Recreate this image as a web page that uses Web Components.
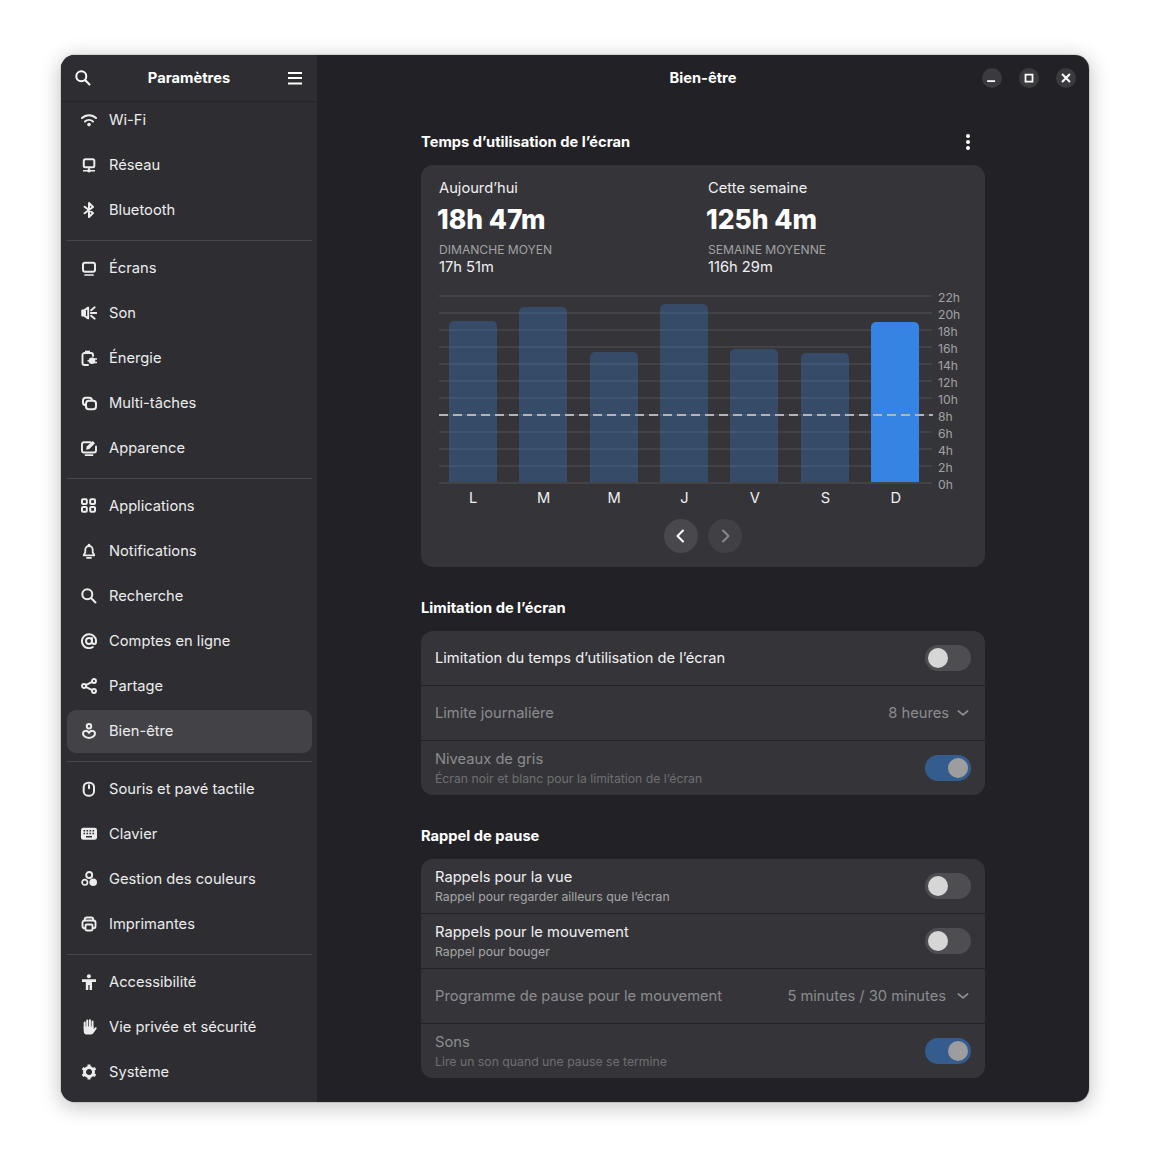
<!DOCTYPE html>
<html lang="fr"><head><meta charset="utf-8"><title>Paramètres</title>
<style>
html,body{margin:0;background:#fff}
body{font-family:Inter,"Noto Sans",sans-serif;font-size:15px;color:#f0f0f1}
</style></head><body>
<wb-page>
<wb-window>
  <wb-sidebar slot="side" title="Paramètres">
    <wb-nav icon="wifi">Wi-Fi</wb-nav><wb-nav icon="network">Réseau</wb-nav><wb-nav icon="bluetooth">Bluetooth</wb-nav>
    <wb-sep></wb-sep>
    <wb-nav icon="display">Écrans</wb-nav><wb-nav icon="sound">Son</wb-nav><wb-nav icon="power">Énergie</wb-nav><wb-nav icon="multi">Multi-tâches</wb-nav><wb-nav icon="appearance">Apparence</wb-nav>
    <wb-sep></wb-sep>
    <wb-nav icon="apps">Applications</wb-nav><wb-nav icon="bell">Notifications</wb-nav><wb-nav icon="search">Recherche</wb-nav><wb-nav icon="at">Comptes en ligne</wb-nav><wb-nav icon="share">Partage</wb-nav><wb-nav icon="wellbeing" selected>Bien-être</wb-nav>
    <wb-sep></wb-sep>
    <wb-nav icon="mouse">Souris et pavé tactile</wb-nav><wb-nav icon="keyboard">Clavier</wb-nav><wb-nav icon="color">Gestion des couleurs</wb-nav><wb-nav icon="printer">Imprimantes</wb-nav>
    <wb-sep></wb-sep>
    <wb-nav icon="a11y">Accessibilité</wb-nav><wb-nav icon="hand">Vie privée et sécurité</wb-nav><wb-nav icon="gear">Système</wb-nav>
  </wb-sidebar>
  <wb-content slot="main" title="Bien-être">
    <wb-section heading="Temps d’utilisation de l’écran" menu>
      <wb-usage-card></wb-usage-card>
    </wb-section>
    <wb-section heading="Limitation de l’écran">
      <wb-list>
        <wb-row label="Limitation du temps d’utilisation de l’écran"><wb-switch></wb-switch></wb-row>
        <wb-row label="Limite journalière" disabled><wb-combo>8 heures</wb-combo></wb-row>
        <wb-row label="Niveaux de gris" sub="Écran noir et blanc pour la limitation de l’écran" disabled><wb-switch on dim></wb-switch></wb-row>
      </wb-list>
    </wb-section>
    <wb-section heading="Rappel de pause">
      <wb-list>
        <wb-row label="Rappels pour la vue" sub="Rappel pour regarder ailleurs que l’écran"><wb-switch></wb-switch></wb-row>
        <wb-row label="Rappels pour le mouvement" sub="Rappel pour bouger"><wb-switch></wb-switch></wb-row>
        <wb-row label="Programme de pause pour le mouvement" disabled><wb-combo wide>5 minutes / 30 minutes</wb-combo></wb-row>
        <wb-row label="Sons" sub="Lire un son quand une pause se termine" disabled><wb-switch on dim></wb-switch></wb-row>
      </wb-list>
    </wb-section>
  </wb-content>
</wb-window>
</wb-page>
<script>
const S=(w=2)=>`fill="none" stroke="currentColor" stroke-width="${w}" stroke-linecap="round" stroke-linejoin="round"`;
const BG='#2e2e32';
const I={
search:`<g ${S()}><circle cx="6.3" cy="6.3" r="5"/><path d="M10.3 10.3l4.200 4.200"/></g>`,
wifi:`<g ${S()}><path d="M1 6a10 10 0 0 1 14 0"/><path d="M4 9.500a6 6 0 0 1 8 0"/></g><circle cx="8" cy="12.600" r="1.800" fill="currentColor"/>`,
network:`<g ${S()}><rect x="2.800" y="2.300" width="10.500" height="8" rx="1.500"/></g><path d="M2 13.700h12M8 10v3.700" stroke="currentColor" stroke-width="1.600" fill="none"/><circle cx="8" cy="13.700" r="1.800" fill="currentColor"/>`,
bluetooth:`<path d="M3.600 4.800L12 11l-4 4V1l4 4-8.400 6.200" ${S(2)}/>`,
display:`<g ${S()}><rect x="2" y="2.700" width="12" height="9" rx="2"/></g><path d="M4 15h8" ${S(1.700)}/>`,
sound:`<path d="M1.200 5.400h2L7.200 2.600v10.800L3.200 10.600h-2z" ${S(1.900)}/><path d="M1.500 5.500h3.500v5H1.500z" fill="currentColor"/><path d="M9.800 8h5.700M10.100 5.300l3.600-3M10.100 10.700l3.600 3" ${S(1.800)}/>`,
power:`<path d="M12 6V5a2 2 0 0 0-2-2H3.500a2 2 0 0 0-2 2v8a2 2 0 0 0 2 2H7" ${S(1.900)}/><path d="M4 .7h5V3H4z" fill="currentColor"/><circle cx="11" cy="10.700" r="3.300" fill="currentColor"/><path d="M6.500 10.700H9M13 9h3M13 12.400h3" fill="none" stroke="currentColor" stroke-width="1.500"/>`,
multi:`<rect x="2" y="2.700" width="9" height="7.500" rx="2.800" ${S(2)}/><rect x="5" y="5.800" width="10" height="8.500" rx="2.800" ${S(2)} style="fill:${BG}"/>`,
appearance:`<path d="M9.500 2.200H3a2 2 0 0 0-2 2v6.300a2 2 0 0 0 2 2h10a2 2 0 0 0 2-2V6.500" ${S(1.900)}/><path d="M4.500 15.200h7" ${S(1.700)}/><path d="M5 9.800l.7-3.300 6-5.500 2.300 2.200-5.600 5.800z" fill="currentColor"/>`,
apps:`<g fill="none" stroke="currentColor" stroke-width="2"><rect x="1" y="1.300" width="4.800" height="4.800" rx="1"/><rect x="9.200" y="1.300" width="4.800" height="4.800" rx="1"/><rect x="1" y="8.900" width="4.800" height="4.800" rx="1"/><rect x="9.200" y="8.900" width="4.800" height="4.800" rx="1"/></g>`,
bell:`<path d="M8 3a3.700 3.700 0 0 0-3.700 3.700v2.500L2.800 12v.4h10.400V12l-1.500-2.800V6.700A3.700 3.700 0 0 0 8 3z" ${S(1.800)}/><circle cx="8" cy="2" r="1.300" fill="currentColor"/><path d="M6 14.800h4" ${S(1.800)}/>`,
at:`<g ${S()}><circle cx="8" cy="8" r="3"/><path d="M11 5v4.200a2.100 2.100 0 0 0 3.800 1c.6-2.900-.2-5.600-2.300-7.400A7 7 0 1 0 11.800 14"/></g>`,
share:`<g fill="none" stroke="currentColor" stroke-width="1.900"><circle cx="3" cy="8" r="2"/><circle cx="13" cy="3" r="2"/><circle cx="13" cy="13" r="2"/><path d="M4.800 7.100l6.400-3.200M4.800 8.900l6.400 3.200"/></g>`,
wellbeing:`<g fill="none" stroke="currentColor" stroke-width="2"><circle cx="8" cy="3.300" r="2.200"/><path d="M8 9.800C6.800 8 5 7.500 3.500 8.100 1.800 8.900 1.500 11.100 2.800 12.700 4 14.200 6 15 8 15s4-.8 5.200-2.300c1.300-1.600 1-3.800-.7-4.600C11 7.500 9.200 8 8 9.800z"/></g>`,
mouse:`<g ${S()}><rect x="2.700" y="1.700" width="10.300" height="13" rx="4.500"/><path d="M8 4.300v3"/></g>`,
keyboard:`<rect x="0" y="1.800" width="16" height="12" rx="2.400" fill="currentColor"/><path d="M2.500 4.800h1.600M5.500 4.800h1.600M8.500 4.800h1.600M11.500 4.800h1.600M2.500 7.500h1.600M5.500 7.500h1.600M8.500 7.500h1.600M11.500 7.500h1.600M5 10.800h6" stroke="${BG}" stroke-width="1.500"/>`,
color:`<g fill="none" stroke="currentColor"><circle cx="8.200" cy="4" r="3" stroke-width="1.900"/><circle cx="3.800" cy="11.300" r="2.700" stroke-width="1.700"/></g><circle cx="12.200" cy="11.300" r="3.800" fill="currentColor"/>`,
printer:`<path d="M3.800 4.500V3.200A1.700 1.700 0 0 1 5.500 1.500h5a1.700 1.700 0 0 1 1.700 1.700v1.300" ${S(1.900)}/><path d="M4 12.300H3.500a2 2 0 0 1-2-2V6.500a2 2 0 0 1 2-2h9a2 2 0 0 1 2 2v3.800a2 2 0 0 1-2 2H12" ${S(1.900)}/><rect x="4.500" y="8.500" width="7" height="6" rx="1.200" ${S(1.900)}/>`,
a11y:`<circle cx="7.900" cy="2.200" r="2" fill="currentColor"/><path d="M1 5.300h14v2.600h-4v8H8.600v-5H7.300v5H4.800v-8H1z" fill="currentColor"/>`,
hand:`<path d="M3.700 9V3.500M6.200 8V1.600M8.900 8V1.300M11.500 9V2.500" fill="none" stroke="currentColor" stroke-width="2" stroke-linecap="round"/><path d="M2.700 7.500h9.800v2.600l1.700-1.600c.8-.6 1.900.3 1.300 1.200l-3 4.400a3 3 0 0 1-2.400 1.400H6.300a3.600 3.600 0 0 1-3.600-3.600z" fill="currentColor"/>`,
gear:`<circle cx="8" cy="8" r="4.500" fill="none" stroke="currentColor" stroke-width="3"/><path d="M8 .5v3M8 12.500v3M1.500 4.300l2.600 1.500M11.900 10.200l2.600 1.500M1.500 11.700l2.600-1.500M11.900 5.800l2.600-1.500" stroke="currentColor" stroke-width="3"/>`,
menu:`<path d="M1 2h14v2H1zM1 7h14v2H1zM1 12.500h14v2H1z" fill="currentColor"/>`,
chevL:`<path d="M10 2.500L4.500 8l5.500 5.500" ${S()}/>`,
chevR:`<path d="M6 2.500L11.500 8 6 13.500" ${S()}/>`,
chevD:`<path d="M2 5.500l6 5 6-5" ${S(2.600)}/>`,
min:`<path d="M2.500 10.500h9v2h-9z" fill="currentColor"/>`,
max:`<path d="M4 4h8v8H4z" fill="none" stroke="currentColor" stroke-width="2"/>`,
close:`<path d="M3.500 3.500l9 9M12.500 3.500l-9 9" fill="none" stroke="currentColor" stroke-width="2.300"/>`,
};
function def(name,css,html){
  customElements.define(name,class extends HTMLElement{
    connectedCallback(){
      if(this.shadowRoot)return;
      const r=this.attachShadow({mode:'open'});
      r.innerHTML=`<style>${css}</style>`+(typeof html==='function'?html(this):html);
    }
  });
}
const F14='400 14.700px/18px Inter,sans-serif',B14='700 14.700px/18px Inter,sans-serif';
def('wb-icon',`:host{display:inline-flex;width:var(--s,16px);height:var(--s,16px);flex:none;color:inherit}svg{width:100%;height:100%;display:block}`,
  h=>`<svg viewBox="0 0 16 16" xmlns="http://www.w3.org/2000/svg">${I[h.getAttribute('name')]||''}</svg>`);
def('wb-page',`:host{display:block;padding:55px 61px 67px;box-sizing:border-box;height:1169px;overflow:hidden}`,`<slot></slot>`);
def('wb-window',`:host{display:flex;height:1047px;border-radius:14px;overflow:hidden;box-shadow:0 4px 20px 2px rgba(0,0,0,.22),0 0 0 1px rgba(0,0,0,.1);background:#222226}`,
  `<slot name="side"></slot><slot name="main"></slot>`);
def('wb-sidebar',`:host{display:flex;flex-direction:column;width:256px;flex:none;background:#2e2e32;box-sizing:border-box;height:100%;overflow:hidden}
 header{height:47px;flex:none;display:flex;align-items:center;justify-content:space-between;padding:0 14px;border-bottom:1px solid #252528;box-sizing:border-box;position:relative;z-index:1;background:#2e2e32;color:#fff}
 h1{font:${B14};margin:0}
 .list{display:flex;flex-direction:column;gap:2px;padding:0 5px 0 6px;margin-top:-3px}`,
 h=>`<header><wb-icon name="search"></wb-icon><h1>${h.getAttribute('title')}</h1><wb-icon name="menu"></wb-icon></header><div class="list"><slot></slot></div>`);
def('wb-nav',`:host{display:flex;align-items:center;height:43px;flex:none;padding:0 14px 1px;gap:12px;border-radius:9px;box-sizing:border-box;color:#ececed;font:${F14}}
 :host([selected]){background:#434347}`,
 h=>`<wb-icon name="${h.getAttribute('icon')}"></wb-icon><span><slot></slot></span>`);
def('wb-sep',`:host{display:block;height:1px;background:#47474b;margin:6px 0 4px}`,``);
def('wb-content',`:host{display:flex;flex-direction:column;flex:1;min-width:0;height:100%;overflow:hidden}
 header{height:46px;margin-bottom:1px;flex:none;display:flex;align-items:center;justify-content:center;position:relative;color:#fff}
 h1{font:${B14};margin:0}
 .ctl{position:absolute;right:13px;top:13px;display:flex;gap:17px}
 .b{width:20px;height:20px;border-radius:50%;background:#3b3b3f;display:flex;align-items:center;justify-content:center;color:#fff;--s:14px}
 .body{width:564px;margin:0 auto;display:flex;flex-direction:column;gap:32px;padding-top:31px}`,
 h=>`<header><h1>${h.getAttribute('title')}</h1><div class="ctl"><div class="b"><wb-icon name="min"></wb-icon></div><div class="b"><wb-icon name="max"></wb-icon></div><div class="b"><wb-icon name="close"></wb-icon></div></div></header><div class="body"><slot></slot></div>`);
def('wb-section',`:host{display:block}
 .t{display:flex;justify-content:space-between;align-items:center;height:18px;margin-bottom:14px;position:relative}
 h2{font:${B14};margin:0;color:#fff}
 .k{display:flex;flex-direction:column;gap:2px;margin-right:15px}
 .k i{width:4px;height:4px;border-radius:50%;background:#fff;display:block}`,
 h=>`<div class="t"><h2>${h.getAttribute('heading')}</h2>${h.hasAttribute('menu')?'<div class="k"><i></i><i></i><i></i></div>':''}</div><slot></slot>`);
def('wb-list',`:host{display:flex;flex-direction:column;gap:1px;background:#232327;border-radius:12px;overflow:hidden}`,`<slot></slot>`);
def('wb-row',`:host{display:flex;align-items:center;justify-content:space-between;height:54px;padding:0 14px;background:#353539;box-sizing:border-box}
 .l{font:${F14};color:#f0f0f1}
 .s{font:400 12.250px/16px Inter,sans-serif;color:#a6a6a8;margin-top:3px}
 :host([disabled]) .l{color:#8c8c8e}
 :host([disabled]) .s{color:#6f6f72}`,
 h=>`<div><div class="l">${h.getAttribute('label')}</div>${h.getAttribute('sub')?`<div class="s">${h.getAttribute('sub')}</div>`:''}</div><slot></slot>`);
def('wb-switch',`:host{display:block;width:46px;height:26px;border-radius:13px;background:#4e4e52;position:relative;flex:none}
 :host([on]){background:#345c8f}
 i{position:absolute;left:3px;top:3px;width:20px;height:20px;border-radius:50%;background:#d6d6d7}
 :host([on]) i{left:23px}
 :host([dim]) i{background:#9d9da0}`,`<i></i>`);
def('wb-combo',`:host{display:flex;align-items:center;gap:8px;color:#8c8c8e;font:${F14};--s:12px;padding-right:2px}
 :host([wide]){gap:11px}`,`<span><slot></slot></span><wb-icon name="chevD"></wb-icon>`);
def('wb-stat',`:host{display:block}
 .a{font:${F14};color:#f0f0f1}
 .b{font:800 26.400px/34px Inter,sans-serif;color:#fff;margin:5px 0 6px -2px}
 .c{font:400 12.100px/16px Inter,sans-serif;color:#a2a2a4}
 .d{font:${F14};color:#f0f0f1;margin-top:0}`,
 h=>`<div class="a">${h.getAttribute('a')}</div><div class="b">${h.getAttribute('b')}</div><div class="c">${h.getAttribute('c')}</div><div class="d">${h.getAttribute('d')}</div>`);
def('wb-chart',`:host{display:flex;align-items:flex-start;gap:6px;margin-top:19px}
 .plot{width:493px;position:relative;flex:none}
 .grid{display:flex;flex-direction:column;gap:15px}
 .grid i{display:block;height:2px;background:#434347}
 .bars{position:absolute;left:-1px;top:0;width:492px;height:187px;display:grid;grid-template-columns:repeat(7,1fr);align-items:end;justify-items:center}
 .bars i{display:block;width:48px;background:rgba(53,132,228,.28);border-radius:5px 5px 0 0}
 .bars i.on{background:#3584e4}
 .dash{position:absolute;left:0;top:119px;width:494px;height:2px;background:repeating-linear-gradient(90deg,#b4b4b8 0 9.500px,transparent 9.500px 14px)}
 .days{position:absolute;left:-1px;top:193px;width:493px;display:grid;grid-template-columns:repeat(7,1fr);justify-items:center;font:${F14};line-height:20px;color:#f0f0f1}
 .y{display:flex;flex-direction:column;margin-top:-6px;font:400 12.200px/17px Inter,sans-serif;color:#a2a2a4}
 .y span{height:17px}`,
 ()=>{const v=[161,175,130,178,133,129,160];const d=['L','M','M','J','V','S','D'];
  return `<div class="plot"><div class="grid">${'<i></i>'.repeat(12)}</div><div class="bars">${v.map((x,i)=>`<i class="${i==6?'on':''}" style="height:${x}px"></i>`).join('')}</div><div class="dash"></div><div class="days">${d.map(x=>`<span>${x}</span>`).join('')}</div></div><div class="y">${[22,20,18,16,14,12,10,8,6,4,2,0].map(x=>`<span>${x}h</span>`).join('')}</div>`});
def('wb-usage-card',`:host{display:block;height:402px;background:#353539;border-radius:12px;box-sizing:border-box;padding:14px 18px 14px}
 .stats{display:grid;grid-template-columns:269px 1fr}
 .nav{display:flex;justify-content:center;gap:10px;margin:26px -18px 0}
 .nav div{width:34px;height:34px;border-radius:50%;display:flex;align-items:center;justify-content:center}
 .p{background:#49494d;color:#fff}.n{background:#414145;color:#8a8a8c}`,
 `<div class="stats"><wb-stat a="Aujourd’hui" b="18h 47m" c="DIMANCHE MOYEN" d="17h 51m"></wb-stat><wb-stat a="Cette semaine" b="125h 4m" c="SEMAINE MOYENNE" d="116h 29m"></wb-stat></div><wb-chart></wb-chart><div class="nav"><div class="p"><wb-icon name="chevL"></wb-icon></div><div class="n"><wb-icon name="chevR"></wb-icon></div></div>`);
</script>
</body></html>
